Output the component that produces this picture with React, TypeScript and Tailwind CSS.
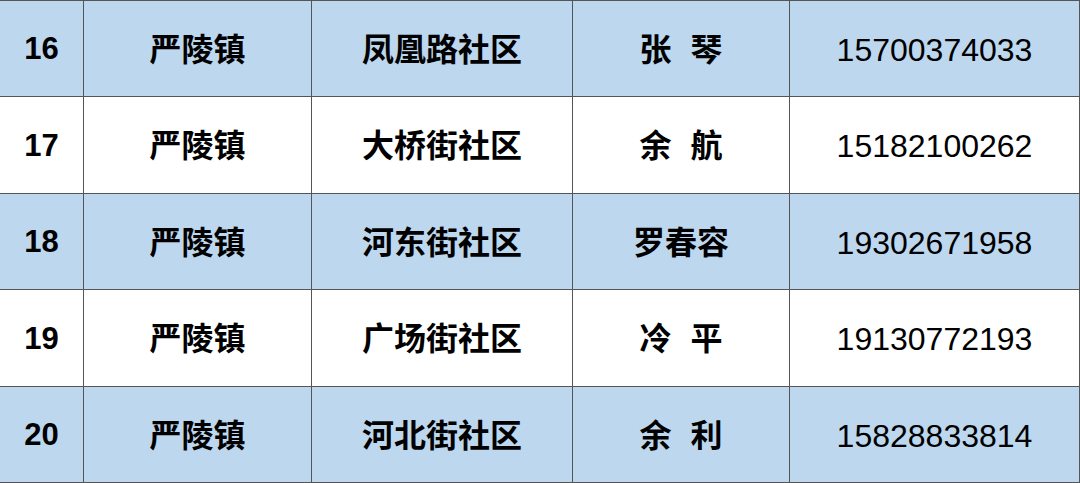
const rows = [
  { no: '16', town: '严陵镇', community: '凤凰路社区', name: '张 琴', phone: '15700374033' },
  { no: '17', town: '严陵镇', community: '大桥街社区', name: '余 航', phone: '15182100262' },
  { no: '18', town: '严陵镇', community: '河东街社区', name: '罗春容', phone: '19302671958' },
  { no: '19', town: '严陵镇', community: '广场街社区', name: '冷 平', phone: '19130772193' },
  { no: '20', town: '严陵镇', community: '河北街社区', name: '余 利', phone: '15828833814' },
]

const cjk = "font-['Liberation_Sans','Noto_Sans_CJK_SC',sans-serif]"

export default function App() {
  return (
    <div className="w-[1080px] h-[483px] bg-white overflow-hidden">
      <div className="grid h-full grid-cols-[83px_227px_260px_216px_289px] grid-rows-[95px_96px_95px_96px_95px] gap-px bg-[#555] pt-px pr-px pb-px text-black">
        {rows.map((r, i) => {
          const bg = i % 2 === 0 ? 'bg-[#bdd7ee]' : 'bg-white'
          return (
            <div key={r.no} className="contents">
              <div className={`${bg} flex items-center justify-center pt-[2px] ${cjk} text-[31px] font-bold`}>{r.no}</div>
              <div className={`${bg} flex items-center justify-center pt-[2px] ${cjk} text-[32px] font-bold`}>{r.town}</div>
              <div className={`${bg} flex items-center justify-center pt-[2px] ${cjk} text-[32px] font-bold`}>{r.community}</div>
              <div className={`${bg} flex items-center justify-center pt-[2px] ${cjk} text-[32px] font-bold whitespace-pre [word-spacing:10px]`}>{r.name}</div>
              <div className={`${bg} flex items-center justify-center pt-[2px] ${cjk} text-[32px]`}>{r.phone}</div>
            </div>
          )
        })}
      </div>
    </div>
  )
}
